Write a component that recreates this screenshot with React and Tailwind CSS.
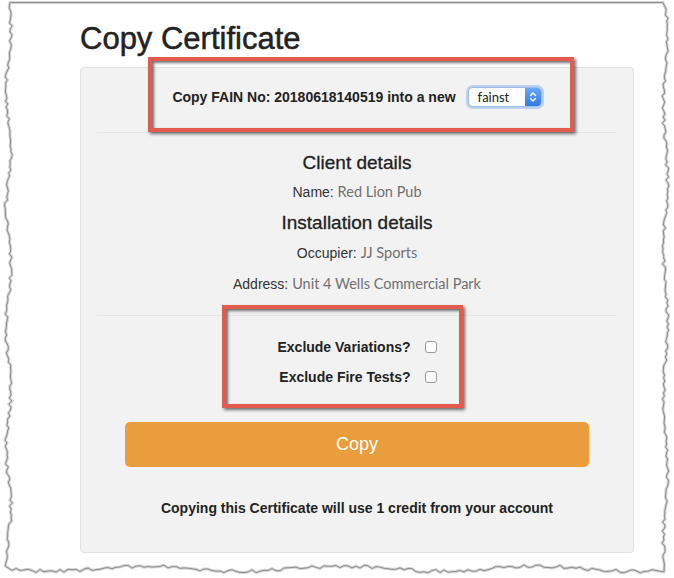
import React from 'react'

// jagged "torn paper" outline drawn around the screenshot
function tornPath() {
  let s = 11
  const rnd = () => { s = (s * 16807) % 2147483647; return (s - 1) / 2147483646 }
  const pts = [[10, 2.5], [663, 2.5]]
  for (let y = 6; y < 566; y += 3) pts.push([664 + Math.sin(y / 23) * 2 + rnd() * 3, y])
  for (let x = 664; x > 10; x -= 4) pts.push([x, 567 + Math.sin(x / 31) * 2.5 + rnd() * 3.5])
  for (let y = 566; y > 5; y -= 3) pts.push([7 + Math.sin(y / 19) * 2.5 + rnd() * 3, y])
  return 'M' + pts.map(p => p[0].toFixed(1) + ' ' + p[1].toFixed(1)).join(' L') + ' Z'
}

const d = tornPath()

function Select() {
  return (
    <div className="flex h-[20px] w-[74px] items-stretch rounded-[5px] border border-[#9cbde9] bg-white text-left shadow-[0_0_0_2px_rgba(120,170,235,0.45)]">
      <span className="flex-1 pl-[9px] text-[13px] leading-[18px] text-[#222] [font-family:Lato,'Liberation_Sans',sans-serif]">fainst</span>
      <span className="flex w-[16px] items-center justify-center rounded-r-[4px] bg-gradient-to-b from-[#6aa8f5] to-[#2f7ae5]">
        <svg width="8" height="12" viewBox="0 0 8 12" fill="none" stroke="white" strokeWidth="1.4" strokeLinecap="round" strokeLinejoin="round">
          <path d="M1.5 4.5 L4 2 L6.5 4.5" />
          <path d="M1.5 7.5 L4 10 L6.5 7.5" />
        </svg>
      </span>
    </div>
  )
}

function Detail({ label, value }) {
  return (
    <p className="text-[14px] leading-[20px] text-[#333]">
      {label} <span className="text-[#707070] [font-family:Lato,'Liberation_Sans',sans-serif] text-[14.5px]">{value}</span>
    </p>
  )
}

export default function App() {
  return (
    <div className="relative h-[578px] w-[674px] overflow-hidden bg-white text-[#222] [font-family:'Liberation_Sans',Arial,sans-serif]">
      <div className="pl-[80px] pr-[40px] pt-[21px]">
        <h1 className="text-[31px] leading-[36px] text-[#222] [-webkit-text-stroke:0.5px_#222]">Copy Certificate</h1>

        <div className="mt-[10px] h-[486px] w-[554px] rounded-[4px] border border-[#e2e2e2] bg-[#f2f2f2] px-4 text-center">
          <div className="mt-[19px] flex items-center justify-center gap-[12px]">
            <span className="text-[14px] font-bold leading-[20px]">Copy FAIN No: 20180618140519 into a new</span>
            <Select />
          </div>
          <div className="mt-[25px] h-px bg-[#e4e4e4]" />

          <h2 className="mt-[18px] text-[19px] leading-[24px] [-webkit-text-stroke:0.3px_#222]">Client details</h2>
          <div className="mt-[7px]"><Detail label="Name:" value="Red Lion Pub" /></div>
          <h2 className="mt-[9px] text-[19px] leading-[24px] [-webkit-text-stroke:0.3px_#222]">Installation details</h2>
          <div className="mt-[8px]"><Detail label="Occupier:" value="JJ Sports" /></div>
          <div className="mt-[11px]"><Detail label="Address:" value="Unit 4 Wells Commercial Park" /></div>
          <div className="mt-[21px] h-px bg-[#e4e4e4]" />

          <div className="mt-[21px] flex justify-center">
            <div className="grid grid-cols-[auto_auto] items-center gap-x-[14px] gap-y-[10px]">
              <span className="text-right text-[14px] font-bold leading-[20px]">Exclude Variations?</span>
              <input type="checkbox" className="h-[12px] w-[12px] appearance-none rounded-[3px] border border-[#9a9a9a] bg-white" />
              <span className="text-right text-[14px] font-bold leading-[20px]">Exclude Fire Tests?</span>
              <input type="checkbox" className="h-[12px] w-[12px] appearance-none rounded-[3px] border border-[#9a9a9a] bg-white" />
            </div>
          </div>

          <button className="mx-[28px] mt-[35px] block h-[45px] w-[464px] rounded-[5px] bg-[#e99d3c] text-[18px] text-white">Copy</button>

          <p className="mt-[31px] text-[14px] font-bold leading-[20px]">Copying this Certificate will use 1 credit from your account</p>
        </div>
      </div>

      {/* annotation boxes */}
      <div className="absolute left-[148px] top-[57px] h-[75px] w-[426px] border-[4px] border-[#e25b4d] shadow-[2px_2px_3px_rgba(0,0,0,0.55),inset_2px_2px_3px_rgba(0,0,0,0.55)]" />
      <div className="absolute left-[222px] top-[305px] h-[103px] w-[241px] border-[4px] border-[#e25b4d] shadow-[2px_2px_3px_rgba(0,0,0,0.55),inset_2px_2px_3px_rgba(0,0,0,0.55)]" />

      <svg className="pointer-events-none absolute inset-0" width="674" height="578" viewBox="0 0 674 578">
        <path d={d} fill="none" stroke="#d4d4d4" strokeWidth="3" />
        <path d={d} fill="none" stroke="#8e8e8e" strokeWidth="1" />
      </svg>
    </div>
  )
}
